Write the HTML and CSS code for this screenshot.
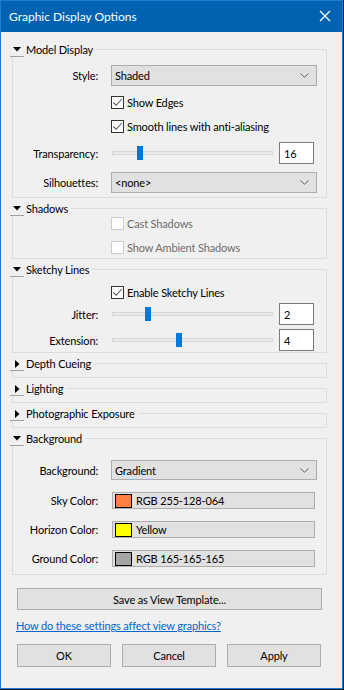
FILE: index.html
```html
<!DOCTYPE html>
<html lang="en">
<head>
    <meta charset="UTF-8">
    <meta name="viewport" content="width=device-width, initial-scale=1.0">
    <title>Graphic Display Options</title>
    <link rel="stylesheet" href="styles.css">
</head>
<body>
    <div class="dialog">
        <div class="titlebar">
            <span class="title">Graphic Display Options</span>
            <svg class="close" width="12" height="12" viewBox="0 0 12 12"><path d="M1 1L11 11M11 1L1 11" stroke="#fff" stroke-width="1.3"/></svg>
        </div>

        <div class="content">
            <!-- Model Display -->
            <section class="group">
                <div class="group-head">
                    <span class="toggle"><svg width="8" height="5" viewBox="0 0 8 5"><path d="M0 0H8L4 4.5Z" fill="#000"/></svg></span>
                    <span class="group-title">Model Display</span>
                </div>
                <div class="group-body model">
                    <div class="row select-row">
                        <span class="lbl">Style:</span>
                        <div class="select">Shaded<svg width="9" height="5" viewBox="0 0 9 5"><path d="M0.5 0.5L4.5 4.2L8.5 0.5" fill="none" stroke="#606060"/></svg></div>
                    </div>
                    <div class="row check-row first-check">
                        <span class="lbl"></span>
                        <span class="check on"><svg width="11" height="11" viewBox="0 0 11 11"><path d="M1.5 5.5L4.2 8.3L9.8 2" fill="none" stroke="#555" stroke-width="1.1"/></svg></span>
                        <span class="check-text">Show Edges</span>
                    </div>
                    <div class="row check-row">
                        <span class="lbl"></span>
                        <span class="check on"><svg width="11" height="11" viewBox="0 0 11 11"><path d="M1.5 5.5L4.2 8.3L9.8 2" fill="none" stroke="#555" stroke-width="1.1"/></svg></span>
                        <span class="check-text">Smooth lines with anti-aliasing</span>
                    </div>
                    <div class="row slider-row">
                        <span class="lbl">Transparency:</span>
                        <div class="slider"><span class="track"></span><span class="thumb" style="left: 25px"></span></div>
                        <div class="num">16</div>
                    </div>
                    <div class="row select-row">
                        <span class="lbl">Silhouettes:</span>
                        <div class="select">&lt;none&gt;<svg width="9" height="5" viewBox="0 0 9 5"><path d="M0.5 0.5L4.5 4.2L8.5 0.5" fill="none" stroke="#606060"/></svg></div>
                    </div>
                </div>
            </section>

            <!-- Shadows -->
            <section class="group">
                <div class="group-head">
                    <span class="toggle"><svg width="8" height="5" viewBox="0 0 8 5"><path d="M0 0H8L4 4.5Z" fill="#000"/></svg></span>
                    <span class="group-title">Shadows</span>
                </div>
                <div class="group-body shadows">
                    <div class="row check-row disabled">
                        <span class="lbl"></span>
                        <span class="check"></span>
                        <span class="check-text">Cast Shadows</span>
                    </div>
                    <div class="row check-row disabled">
                        <span class="lbl"></span>
                        <span class="check"></span>
                        <span class="check-text">Show Ambient Shadows</span>
                    </div>
                </div>
            </section>

            <!-- Sketchy Lines -->
            <section class="group">
                <div class="group-head">
                    <span class="toggle"><svg width="8" height="5" viewBox="0 0 8 5"><path d="M0 0H8L4 4.5Z" fill="#000"/></svg></span>
                    <span class="group-title">Sketchy Lines</span>
                </div>
                <div class="group-body sketchy">
                    <div class="row check-row">
                        <span class="lbl"></span>
                        <span class="check on"><svg width="11" height="11" viewBox="0 0 11 11"><path d="M1.5 5.5L4.2 8.3L9.8 2" fill="none" stroke="#555" stroke-width="1.1"/></svg></span>
                        <span class="check-text">Enable Sketchy Lines</span>
                    </div>
                    <div class="row slider-row">
                        <span class="lbl">Jitter:</span>
                        <div class="slider"><span class="track"></span><span class="thumb" style="left: 33px"></span></div>
                        <div class="num">2</div>
                    </div>
                    <div class="row slider-row">
                        <span class="lbl">Extension:</span>
                        <div class="slider"><span class="track"></span><span class="thumb" style="left: 64px"></span></div>
                        <div class="num">4</div>
                    </div>
                </div>
            </section>

            <!-- collapsed groups -->
            <section class="group collapsed">
                <div class="group-head">
                    <span class="toggle"><svg width="5" height="8" viewBox="0 0 5 8"><path d="M0 0V8L4.5 4Z" fill="#000"/></svg></span>
                    <span class="group-title">Depth Cueing</span>
                </div>
                <div class="group-body"></div>
            </section>

            <section class="group collapsed">
                <div class="group-head">
                    <span class="toggle"><svg width="5" height="8" viewBox="0 0 5 8"><path d="M0 0V8L4.5 4Z" fill="#000"/></svg></span>
                    <span class="group-title">Lighting</span>
                </div>
                <div class="group-body"></div>
            </section>

            <section class="group collapsed">
                <div class="group-head">
                    <span class="toggle"><svg width="5" height="8" viewBox="0 0 5 8"><path d="M0 0V8L4.5 4Z" fill="#000"/></svg></span>
                    <span class="group-title">Photographic Exposure</span>
                </div>
                <div class="group-body"></div>
            </section>

            <!-- Background -->
            <section class="group">
                <div class="group-head">
                    <span class="toggle"><svg width="8" height="5" viewBox="0 0 8 5"><path d="M0 0H8L4 4.5Z" fill="#000"/></svg></span>
                    <span class="group-title">Background</span>
                </div>
                <div class="group-body background">
                    <div class="row select-row">
                        <span class="lbl">Background:</span>
                        <div class="select">Gradient<svg width="9" height="5" viewBox="0 0 9 5"><path d="M0.5 0.5L4.5 4.2L8.5 0.5" fill="none" stroke="#606060"/></svg></div>
                    </div>
                    <div class="row color-row">
                        <span class="lbl">Sky Color:</span>
                        <div class="color-field"><span class="swatch" style="background: #ff8040"></span>RGB 255-128-064</div>
                    </div>
                    <div class="row color-row">
                        <span class="lbl">Horizon Color:</span>
                        <div class="color-field"><span class="swatch" style="background: #ffff00"></span>Yellow</div>
                    </div>
                    <div class="row color-row">
                        <span class="lbl">Ground Color:</span>
                        <div class="color-field"><span class="swatch" style="background: #a5a5a5"></span>RGB 165-165-165</div>
                    </div>
                </div>
            </section>

            <button class="btn wide">Save as View Template...</button>

            <a class="help" href="#">How do these settings affect view graphics?</a>

            <div class="actions">
                <button class="btn">OK</button>
                <button class="btn">Cancel</button>
                <button class="btn">Apply</button>
            </div>
        </div>
    </div>
</body>
</html>
```
FILE: styles.css
```css
html {
    background-color: #1c1c1c;
}

body {
    margin: 0;
    font-family: Lato, "Liberation Sans", sans-serif;
    font-size: 11px;
    letter-spacing: -0.15px;
    color: #000;
}

.dialog {
    width: 341px;
    height: 687px;
    border: 1px solid #1a7fd4;
    background-color: #f0f0f0;
    display: flex;
    flex-direction: column;
}

.titlebar {
    height: 31px;
    background-color: #0063b1;
    color: #fff;
    display: flex;
    align-items: center;
    justify-content: space-between;
    padding: 0 11px 0 8px;
    flex-shrink: 0;
}

.title {
    font-size: 12px;
    letter-spacing: 0;
    padding-bottom: 1px;
}

.close {
    display: block;
    margin-bottom: 1px;
}

.content {
    padding: 17px 15px 0 11px;
    display: flex;
    flex-direction: column;
}

/* group boxes */
.group {
    border: 1px solid #dcdcdc;
    margin-bottom: 10px;
}

.group-head {
    display: flex;
    align-items: center;
    height: 14px;
    margin: -8px 0 0 -3px;
    width: fit-content;
    background-color: #f0f0f0;
    padding-right: 3px;
}

.toggle {
    width: 14px;
    height: 13px;
    border-bottom: 1px solid #a0a0a0;
    display: flex;
    align-items: center;
    justify-content: center;
    margin-top: 2px;
}

.toggle svg {
    display: block;
}

.group-title {
    margin-left: 2px;
}

.group-body {
    display: flex;
    flex-direction: column;
}

.group.collapsed .group-body {
    height: 7px;
}

.model {
    padding: 9px 0 4px;
}

.shadows {
    padding: 0 0 3px;
}

.sketchy {
    padding: 8px 0 1px;
}

.background {
    padding: 15px 0 7px;
}

/* rows */
.row {
    display: flex;
    align-items: center;
}

.lbl {
    width: 85px;
    text-align: right;
    margin-right: 13px;
    flex-shrink: 0;
}

.select-row {
    height: 21px;
}

.check-row {
    height: 16px;
}

.slider-row {
    height: 22px;
}

.color-row {
    height: 17px;
}

.model .row + .row {
    margin-top: 8px;
}

.model .first-check {
    margin-top: 9px;
}

.model .slider-row {
    margin-top: 6px;
}

.shadows .row + .row {
    margin-top: 8px;
}

.sketchy .slider-row {
    margin-top: 3px;
}

.sketchy .slider-row + .slider-row {
    margin-top: 4px;
}

.background .select-row {
    height: 20px;
}

.background .color-row {
    margin-top: 12px;
}

/* controls */
.select {
    width: 194px;
    height: 19px;
    border: 1px solid #adadad;
    background-color: #e1e1e1;
    display: flex;
    align-items: center;
    justify-content: space-between;
    padding: 0 7px 0 3px;
}

.background .select {
    height: 18px;
}

.check {
    width: 11px;
    height: 11px;
    border: 1px solid #333;
    background-color: #fff;
    margin-right: 3px;
}

.check svg {
    display: block;
}

.disabled .check {
    border-color: #cccccc;
}

.disabled .check-text {
    color: #6d6d6d;
}

.slider {
    width: 161px;
    height: 14px;
    margin-left: 1px;
    position: relative;
    display: flex;
    align-items: center;
}

.track {
    width: 100%;
    height: 2px;
    background-color: #e7eaea;
    border: 1px solid #d6d6d6;
}

/* thumb sits over the track */
.thumb {
    position: absolute;
    top: 0;
    width: 6px;
    height: 14px;
    background-color: #0078d7;
}

.num {
    width: 29px;
    height: 20px;
    border: 1px solid #7a7a7a;
    background-color: #fff;
    margin-left: 6px;
    padding-left: 4px;
    display: flex;
    align-items: center;
}

.color-field {
    width: 199px;
    height: 15px;
    border: 1px solid #adadad;
    background-color: #e1e1e1;
    margin-left: 1px;
    display: flex;
    align-items: center;
    padding-left: 2px;
}

.swatch {
    width: 15px;
    height: 12px;
    border: 1px solid #000;
    margin-right: 4px;
}

/* buttons */
.btn {
    font: inherit;
    letter-spacing: inherit;
    color: #000;
    background-color: #e1e1e1;
    border: 1px solid #adadad;
    height: 22px;
    padding: 0;
}

.wide {
    margin: 3px 5px 0 5px;
    height: 22px;
}

.help {
    color: #0066cc;
    margin: 9px 0 0 4px;
    align-self: flex-start;
}

.actions {
    display: flex;
    gap: 11px;
    margin: 12px 5px 0 5px;
}

.actions .btn {
    width: 94px;
    height: 23px;
}
```
